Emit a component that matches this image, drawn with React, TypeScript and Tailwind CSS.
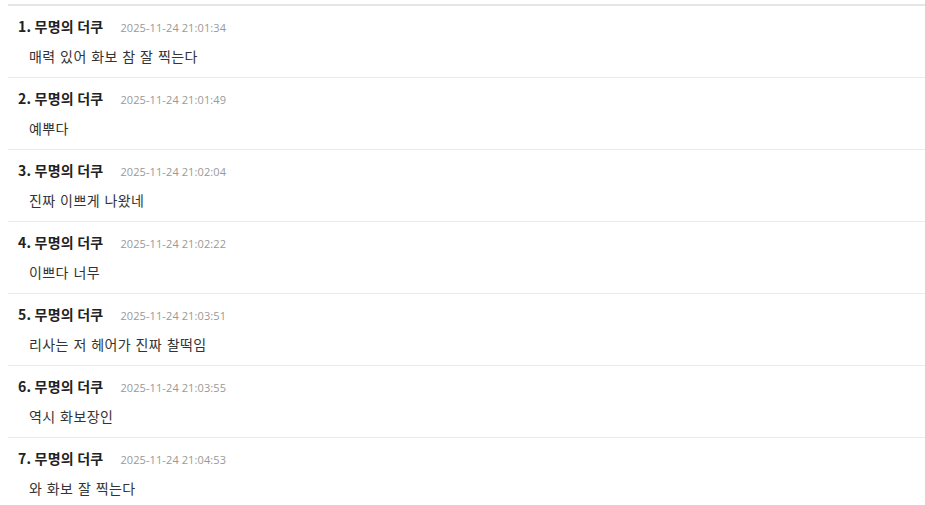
const comments = [
  { time: "2025-11-24 21:01:34", text: "매력 있어 화보 참 잘 찍는다" },
  { time: "2025-11-24 21:01:49", text: "예뿌다" },
  { time: "2025-11-24 21:02:04", text: "진짜 이쁘게 나왔네" },
  { time: "2025-11-24 21:02:22", text: "이쁘다 너무" },
  { time: "2025-11-24 21:03:51", text: "리사는 저 헤어가 진짜 찰떡임" },
  { time: "2025-11-24 21:03:55", text: "역시 화보장인" },
  { time: "2025-11-24 21:04:53", text: "와 화보 잘 찍는다" },
];

export default function App() {
  return (
    <div
      className="w-[925px] h-[505px] overflow-hidden bg-white pt-1 pl-2"
      style={{ fontFamily: '"Noto Sans CJK KR", "Noto Sans", sans-serif' }}
    >
      <ul className="border-t-2 border-[#e5e5e5]">
        {comments.map((c, i) => (
          <li key={i} className="border-b border-[#ececec] pl-[10px] pt-[11px] h-[72px]">
            <div className="flex items-baseline h-[18px] leading-[18px]">
              <span className="text-[14px] font-bold tracking-[0.2px] text-[#222]">{i + 1}. 무명의 더쿠</span>
              <span
                className="ml-[17px] text-[11px] tracking-[0.1px] text-[#999]"
                style={{ fontFamily: '"Open Sans", "Noto Sans", sans-serif' }}
              >
                {c.time}
              </span>
            </div>
            <div className="mt-[11px] pl-[11px] text-[14px] leading-[20px] tracking-[0.4px] [word-spacing:1px] text-[#333]">
              {c.text}
            </div>
          </li>
        ))}
      </ul>
    </div>
  );
}
